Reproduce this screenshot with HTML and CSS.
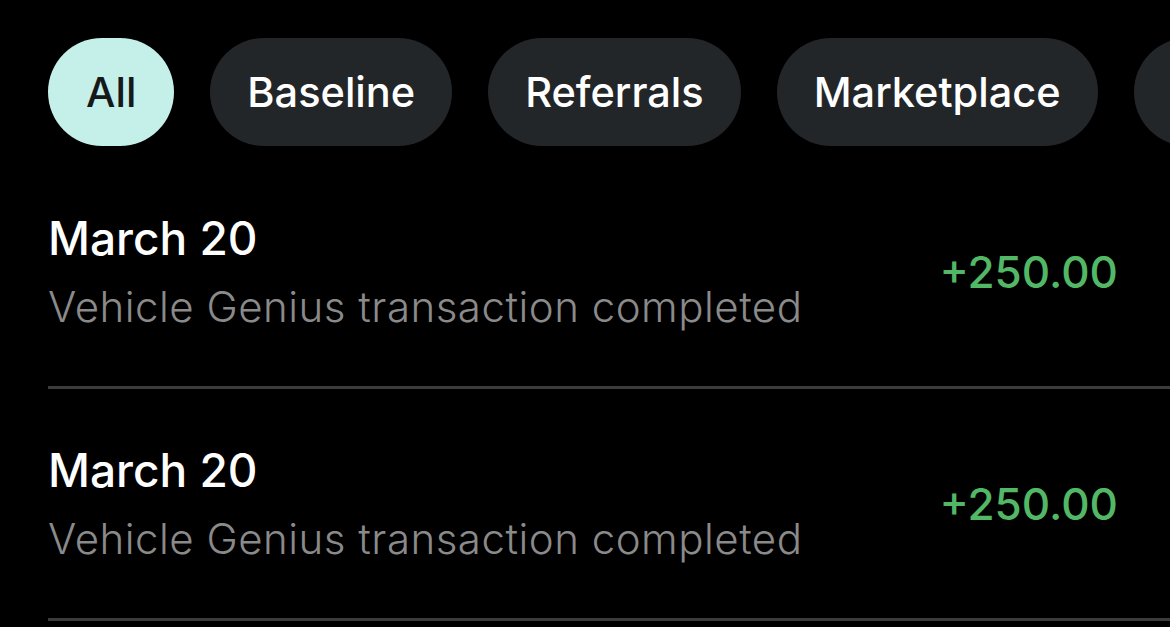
FILE: index.html
```html
<!DOCTYPE html>
<html lang="en">
<head>
<meta charset="utf-8">
<title>Transactions</title>
<link rel="stylesheet" href="styles.css">
</head>
<body>
<div class="screen">
  <nav class="chips">
    <span class="chip chip-active">All</span>
    <span class="chip">Baseline</span>
    <span class="chip">Referrals</span>
    <span class="chip">Marketplace</span>
    <span class="chip chip-more" aria-hidden="true"></span>
  </nav>
  <ul class="list">
    <li class="row">
      <div class="info">
        <div class="date">March 20</div>
        <div class="desc">Vehicle Genius transaction completed</div>
      </div>
      <div class="amount">+250.00</div>
    </li>
    <li class="row">
      <div class="info">
        <div class="date">March 20</div>
        <div class="desc">Vehicle Genius transaction completed</div>
      </div>
      <div class="amount">+250.00</div>
    </li>
  </ul>
</div>
</body>
</html>
```

FILE: styles.css
```css
html, body {
  margin: 0;
  padding: 0;
  background: #000;
}
body {
  width: 1170px;
  height: 627px;
  overflow: hidden;
  font-family: "Inter", "Noto Sans", sans-serif;
  color: #fff;
}
.screen {
  display: flex;
  flex-direction: column;
}
.chips {
  display: flex;
  gap: 36px;
  padding: 38px 0 0 48px;
  white-space: nowrap;
  overflow: hidden;
}
.chip {
  flex: none;
  height: 108px;
  padding: 0 37px;
  border-radius: 54px;
  background: #232629;
  color: #fff;
  font-size: 41.5px;
  font-weight: 500;
  display: flex;
  align-items: center;
  box-sizing: border-box;
}
.chip-active {
  background: #c5efe9;
  color: #15191a;
  padding: 0 38px;
}
.chip-more {
  width: 200px;
}
.list {
  list-style: none;
  margin: 11px 0 0 48px;
  padding: 0;
}
.row {
  height: 232px;
  box-sizing: border-box;
  border-bottom: 3px solid #3b3b3b;
  padding-right: 52px;
  display: flex;
  align-items: center;
  justify-content: space-between;
}
.info {
  display: flex;
  flex-direction: column;
  gap: 20px;
}
.date {
  font-size: 46px;
  font-weight: 500;
  line-height: 1.1;
}
.desc {
  font-size: 42px;
  font-weight: 300;
  line-height: 1.1;
  letter-spacing: 0.5px;
  color: #8a8a8a;
}
.amount {
  font-family: "Inter", "Roboto", sans-serif;
  font-size: 44px;
  font-weight: 500;
  color: #52b866;
}
```
